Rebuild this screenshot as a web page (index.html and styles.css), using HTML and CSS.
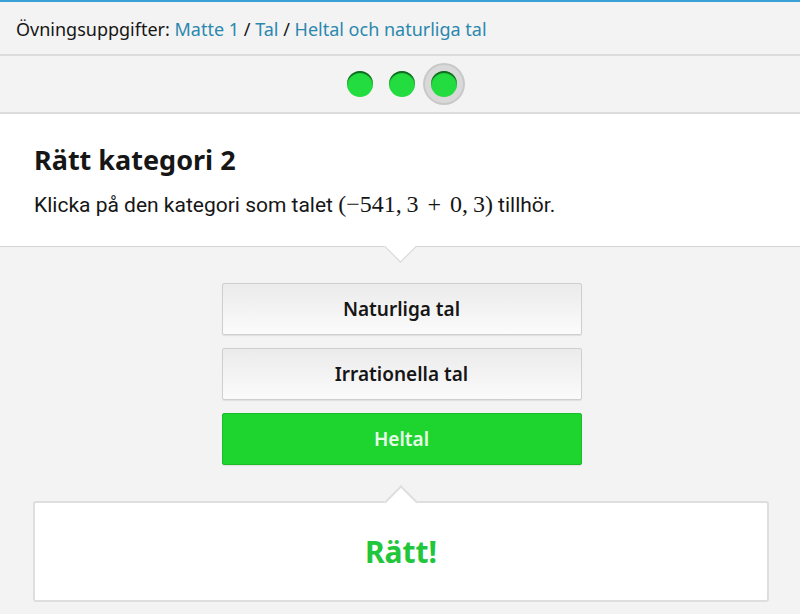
FILE: index.html
```html
<!DOCTYPE html>
<html lang="sv">
<head>
    <meta charset="UTF-8">
    <meta name="viewport" content="width=device-width, initial-scale=1.0">
    <title>Rätt kategori 2</title>
    <link rel="stylesheet" href="styles.css">
</head>
<body>
    <div class="breadcrumb">
        Övningsuppgifter: <a href="#">Matte 1</a> / <a href="#">Tal</a> / <a href="#">Heltal och naturliga tal</a>
    </div>

    <div class="progress">
        <span class="dot"></span>
        <span class="dot"></span>
        <span class="dot active"></span>
    </div>

    <div class="question">
        <h1>Rätt kategori 2</h1>
        <p>Klicka på den kategori som talet <span class="math">(&minus;541,&thinsp;3 + 0,&thinsp;3)</span> tillhör.</p>
    </div>

    <div class="choices">
        <button class="choice">Naturliga tal</button>
        <button class="choice">Irrationella tal</button>
        <button class="choice correct">Heltal</button>
    </div>

    <div class="feedback">
        <span>Rätt!</span>
    </div>
</body>
</html>
```

FILE: styles.css
```css
body {
    margin: 0;
    padding: 0;
    background: #f4f3f3;
    font-family: "Noto Sans", sans-serif;
    color: #161616;
    border-top: 2px solid #3a9fd6;
}
.breadcrumb {
    height: 52px;
    line-height: 54px;
    padding-left: 16px;
    font-size: 18px;
    border-bottom: 2px solid #dcdcdc;
}
.breadcrumb a {
    color: #2a88ae;
    text-decoration: none;
}
.progress {
    height: 56px;
    display: flex;
    justify-content: center;
    align-items: center;
    gap: 16px;
    padding-left: 3px;
    border-bottom: 2px solid #dcdcdc;
}
.dot {
    width: 26px;
    height: 26px;
    border-radius: 50%;
    background: #22dc40;
    box-shadow: inset 0 2px 1px rgba(0, 0, 0, 0.55);
}
.dot.active {
    box-shadow: inset 0 2px 1px rgba(0, 0, 0, 0.55), 0 0 0 6px #d9d9d9, 0 0 0 8px #c8c8c8;
}
.question {
    position: relative;
    background: #fff;
    padding: 26px 34px 25px;
    border-bottom: 1px solid #d4d4d4;
}
.question h1 {
    margin: 0;
    font-size: 27px;
    font-weight: 700;
    line-height: 40px;
}
.question p {
    margin: 8px 0 0;
    font-family: Roboto, sans-serif;
    font-size: 21px;
    line-height: 32px;
}
.math {
    font-family: "Liberation Serif", serif;
    font-size: 24px;
    word-spacing: 3px;
}
/* notch under the question */
.question::after {
    content: "";
    position: absolute;
    left: 389px;
    bottom: -12px;
    width: 22px;
    height: 22px;
    background: #fff;
    border-right: 1px solid #d4d4d4;
    border-bottom: 1px solid #d4d4d4;
    transform: rotate(45deg);
}
.choices {
    display: flex;
    flex-direction: column;
    align-items: center;
    gap: 13px;
    padding-top: 36px;
    padding-left: 3px;
}
.choice {
    width: 360px;
    height: 52px;
    font-family: "Noto Sans", sans-serif;
    font-size: 19px;
    font-weight: 600;
    color: #161616;
    background: linear-gradient(180deg, #ebebeb 0%, #fbfbfb 100%);
    border: 1px solid #cfcfcf;
    border-radius: 2px;
    box-shadow: 0 1px 1px rgba(0, 0, 0, 0.08);
}
.choice.correct {
    background: #1ed42f;
    border-color: #19bd29;
    color: #e9fbe9;
}
.feedback {
    position: relative;
    margin: 36px 31px 0 33px;
    height: 97px;
    background: #fff;
    border: 2px solid #dedede;
    border-radius: 3px;
    display: flex;
    justify-content: center;
    align-items: center;
}
.feedback span {
    color: #22c63a;
    font-size: 30px;
    font-weight: 700;
}
.feedback::before {
    content: "";
    position: absolute;
    left: 354px;
    top: -13px;
    width: 22px;
    height: 22px;
    background: #fff;
    border-top: 2px solid #dedede;
    border-left: 2px solid #dedede;
    transform: rotate(45deg);
}
```
